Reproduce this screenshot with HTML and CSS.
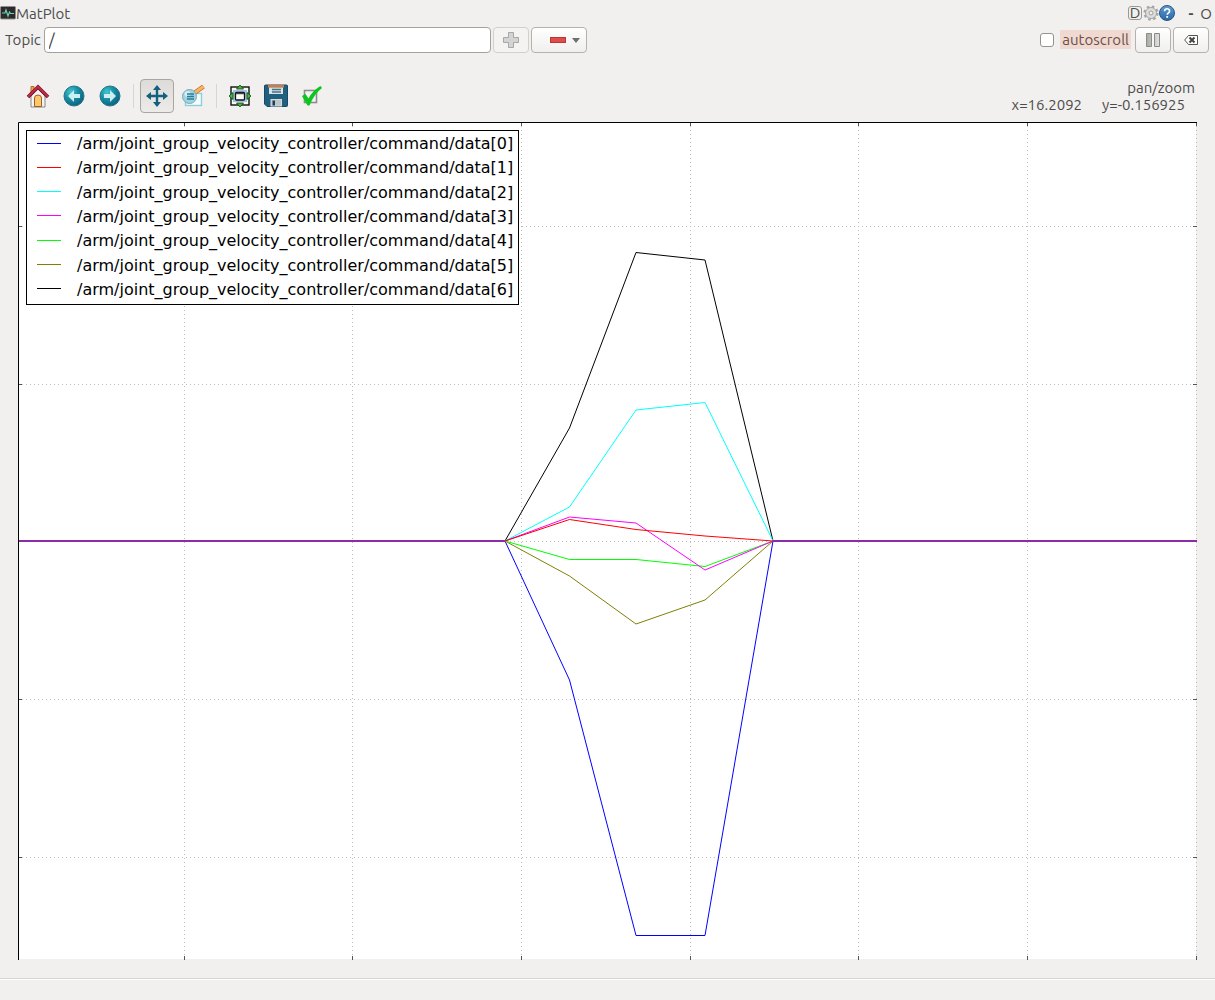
FILE: index.html
```html
<!DOCTYPE html>
<html lang="en">
<head>
<meta charset="utf-8">
<title>MatPlot</title>
<link rel="stylesheet" href="styles.css">
</head>
<body>
<header class="titlebar">
  <svg class="app-icon" width="16" height="14" viewBox="0 0 16 14" aria-hidden="true"><rect x=".5" y=".5" width="15" height="12.500" rx="1" fill="#2b2b2b" stroke="#8f8f8f"/><path d="M2 7h3l1-3 2 6 1.500-4 1 1.500H14" fill="none" stroke="#6fd0b4" stroke-width="1.200"/></svg>
  <h1 class="title">MatPlot</h1>
  <div class="window-buttons">
    <button class="flat dock" aria-label="Dock"><span class="dock-letter">D</span></button>
    <button class="flat" aria-label="Settings"><svg width="16" height="16" viewBox="0 0 16 16"><circle cx="8" cy="8" r="6.300" fill="none" stroke="#a5a5a5" stroke-width="2.600" stroke-dasharray="2.500 2.448"/><circle cx="8" cy="8" r="5.500" fill="#dcdcdc" stroke="#a5a5a5"/><circle cx="8" cy="8" r="2" fill="#f1f0ee" stroke="#a0a0a0"/></svg></button>
    <button class="flat" aria-label="Help"><svg width="16" height="16" viewBox="0 0 16 16"><defs><linearGradient id="help" x1="0" y1="0" x2="0" y2="1"><stop offset="0" stop-color="#5f9bd0"/><stop offset="1" stop-color="#2a67a5"/></linearGradient></defs><circle cx="8" cy="8" r="7.500" fill="url(#help)" stroke="#27588c"/><path d="M5.600 6.200c0-3.200 5-3.200 5 0 0 1.700-2.400 1.700-2.400 3.600" fill="none" stroke="#fff" stroke-width="1.600"/><rect x="7.300" y="11" width="1.800" height="1.800" fill="#fff"/></svg></button>
    <button class="flat minimize" aria-label="Minimize">-</button>
    <button class="flat maximize" aria-label="Float">O</button>
  </div>
</header>

<form class="topic-bar">
  <label for="topic">Topic</label>
  <input class="topic-input" id="topic" type="text" value="/">
  <button class="btn add" type="button" aria-label="Add topic" disabled><svg width="16" height="16" viewBox="0 0 16 16"><path d="M5.500.500h5v5h5v5h-5v5h-5v-5h-5v-5h5z" fill="#d3d3d3" stroke="#a6a6a6"/></svg></button>
  <button class="btn remove" type="button" aria-label="Remove topic"><svg width="16" height="6" viewBox="0 0 16 6"><rect x=".5" y=".5" width="15" height="5" fill="#e04c4c" stroke="#b83636"/></svg><svg width="8" height="6" viewBox="0 0 8 6"><path d="M0 1h8L4 6z" fill="#6f6f6f"/></svg></button>
  <span class="spacer"></span>
  <input class="check" id="autoscroll" type="checkbox">
  <label class="check-label" for="autoscroll">autoscroll</label>
  <button class="btn pause" type="button" aria-label="Pause"><svg width="14" height="14" viewBox="0 0 14 14"><defs><linearGradient id="bar"><stop offset="0" stop-color="#a8aaa6"/><stop offset="1" stop-color="#e2e3e0"/></linearGradient></defs><path d="M.5.500h5v13h-5zM8.500.500h5v13h-5z" fill="url(#bar)" stroke="#8a8c88"/></svg></button>
  <button class="btn clear" type="button" aria-label="Clear plot"><svg width="14" height="10" viewBox="0 0 14 10"><path d="M4.500.500h9v9h-9L.700 5z" fill="#fff" stroke="#555"/><path d="M5.500 2.500l5 5m0-5l-5 5" stroke="#444" stroke-width="2"/></svg></button>
</form>

<main class="figure">
  <div class="toolbar">
    <button class="tool" aria-label="Home"><svg width="24" height="24" viewBox="0 0 24 24"><path d="M5 2.500h3V10H5z" fill="#f5a83c" stroke="#b06a28"/><path d="M5 12l7-7 7 7v11H5z" fill="#f4f4f4" stroke="#888"/><path d="M8.500 22.500V14q0-3 3.500-3t3.500 3v8.500z" fill="#fcc868" stroke="#a05a2c"/><path d="M2 13L12 3l10 10" fill="none" stroke="#6d1426" stroke-width="3.600"/><path d="M2 12.700L12 2.700l10 10" fill="none" stroke="#c4284a" stroke-width="2.200"/></svg></button>
    <button class="tool" aria-label="Back"><svg width="24" height="24" viewBox="0 0 24 24"><defs><radialGradient id="ball" cx=".35" cy=".3" r=".75"><stop offset="0" stop-color="#40c8d0"/><stop offset=".5" stop-color="#158ca2"/><stop offset="1" stop-color="#0c607e"/></radialGradient></defs><circle cx="12" cy="12" r="10" fill="url(#ball)" stroke="#2c7188"/><path d="M6 12l6-6v4h6v4h-6v4z" fill="#cdeef2"/></svg></button>
    <button class="tool" aria-label="Forward"><svg width="24" height="24" viewBox="0 0 24 24"><circle cx="12" cy="12" r="10" fill="url(#ball)" stroke="#2c7188"/><path d="M18 12l-6-6v4H6v4h6v4z" fill="#cdeef2"/></svg></button>
    <span class="divider"></span>
    <button class="tool active" aria-label="Pan" aria-pressed="true"><svg width="24" height="24" viewBox="0 0 24 24"><path d="M12 3v18M3 12h18" stroke="#13607f" stroke-width="2.400"/><path d="M12 1l4 5H8zM12 23l4-5H8zM1 12l5-4v8zM23 12l-5-4v8z" fill="#13607f"/></svg></button>
    <button class="tool" aria-label="Zoom to rectangle"><svg width="24" height="24" viewBox="0 0 24 24"><rect x="4.500" y="9.500" width="16" height="12" fill="#f6fbfc" stroke="#8ccfdc" stroke-width="1.400"/><path d="M14 8.500l8.500-6" stroke="#b5642a" stroke-width="4.400"/><path d="M14 8.500l8.500-6" stroke="#fbb55c" stroke-width="3"/><circle cx="8.500" cy="12.500" r="7" fill="#a4d3de" stroke="#7aa9b8"/><circle cx="6.500" cy="10" r="3" fill="#d3edf2"/><path d="M6 10h7M6 12.500h7M6 15h7" stroke="#24809a" stroke-width="1.300"/></svg></button>
    <span class="divider"></span>
    <button class="tool" aria-label="Configure subplots"><svg width="24" height="24" viewBox="0 0 24 24"><rect x="3" y="3" width="18" height="18" fill="#f4f6f8" stroke="#111" stroke-width="1.400"/><rect x="5" y="6" width="14" height="12" fill="#a3c4e0"/><rect x="7.500" y="8.500" width="9" height="7.500" rx="1" fill="#fff" stroke="#111" stroke-width="1.300"/><path d="M8 9.500h8" stroke="#444" stroke-width="1.500"/><path d="M12 1l3.500 4h-7zM12 23l3.500-4h-7zM1 12l4-3.500v7zM23 12l-4-3.500v7z" fill="#38c438" stroke="#123d12" stroke-width=".8"/></svg></button>
    <button class="tool" aria-label="Save figure"><svg width="24" height="24" viewBox="0 0 24 24"><path d="M.5 2q0-1 1-1h21q1 0 1 1v19.500q0 1-1 1H3L.5 20z" fill="#205f80" stroke="#174962"/><path d="M4 1h16v2.500H4z" fill="#d67a3c"/><path d="M5 3.500h14V10H5z" fill="#d9e4e8"/><path d="M8 5.500h9M8 8h9" stroke="#477083" stroke-width="1.300"/><rect x="7" y="15.500" width="10.500" height="6.500" fill="#bfc4c6" stroke="#d8dcde"/><path d="M8.500 16.500h2.500v5H8.500z" fill="#174258"/></svg></button>
    <button class="tool" aria-label="Edit curves"><svg width="24" height="24" viewBox="0 0 24 24"><rect x="4.500" y="6.500" width="12" height="12" fill="#f4f4f4" stroke="#8d8d8d" stroke-width="1.600"/><path d="M2 12l3.500-2 3 4.500Q13 6 20.500 2L22 4q-8 6-12.500 17.500H7.500z" fill="#0bc71d"/></svg></button>
    <output class="readout"><span>pan/zoom</span><span class="coords"><span>x=16.2092</span><span>y=-0.156925</span></span></output>
  </div>

  <div class="plot">
    <svg class="chart" viewBox="0 0 1179 838" preserveAspectRatio="none" role="img" aria-label="Joint velocity commands over time">
      <rect width="1178" height="837" fill="#fff"/>
      <path class="grid" d="M166.500 0v838M334.500 0v838M503.500 0v838M672.500 0v838M840.500 0v838M1009.500 0v838M1178.500 0v838M0 104.500h1179M0 262.500h1179M0 419.500h1179M0 577.500h1179M0 735.500h1179"/>
      <path class="tick" d="M166.500 0v4M334.500 0v4M503.500 0v4M672.500 0v4M840.500 0v4M1009.500 0v4M1178.500 0v4M166.500 834v4M334.500 834v4M503.500 834v4M672.500 834v4M840.500 834v4M1009.500 834v4M1178.500 834v4M0 104.500h4M0 262.500h4M0 419.500h4M0 577.500h4M0 735.500h4M1175 104.500h4M1175 262.500h4M1175 419.500h4M1175 577.500h4M1175 735.500h4"/>
      <polyline class="line s0" points="487,419 551.500,558 618,813.500 687,813.500 755,419"/>
      <polyline class="line s6" points="487,419 551.500,306 618,130.500 687,138 755,419"/>
      <polyline class="line s2" points="487,419 551.500,385 618,288 687,280.500 755,419"/>
      <polyline class="line s5" points="487,419 551.500,454 618,502 687,478 755,419"/>
      <polyline class="line s4" points="487,419 551.500,437.500 618,437.500 687,444.500 755,419"/>
      <polyline class="line s3" points="487,419 551.500,395 618,401 687,448 755,419"/>
      <polyline class="line s1" points="487,419 551.500,397.500 618,407.500 687,414 755,419"/>
      <path class="rest" d="M0 419h487M755 419h424"/>
      <path class="frame" d="M.5 838V.500H1179"/>
    </svg>
    <ul class="legend">
      <li><i class="swatch b0"></i>/arm/joint_group_velocity_controller/command/data[0]</li>
      <li><i class="swatch b1"></i>/arm/joint_group_velocity_controller/command/data[1]</li>
      <li><i class="swatch b2"></i>/arm/joint_group_velocity_controller/command/data[2]</li>
      <li><i class="swatch b3"></i>/arm/joint_group_velocity_controller/command/data[3]</li>
      <li><i class="swatch b4"></i>/arm/joint_group_velocity_controller/command/data[4]</li>
      <li><i class="swatch b5"></i>/arm/joint_group_velocity_controller/command/data[5]</li>
      <li><i class="swatch b6"></i>/arm/joint_group_velocity_controller/command/data[6]</li>
    </ul>
  </div>
</main>
<footer class="statusbar"></footer>
</body>
</html>
```
FILE: styles.css
```css
* { box-sizing: border-box; }

body {
  margin: 0;
  height: 100vh;
  display: flex;
  flex-direction: column;
  background: #f1f0ee;
  color: #4c4c4c;
  font: 15px/17px "Ubuntu", "Open Sans", "Noto Sans", sans-serif;
}

button, input { font: inherit; color: inherit; margin: 0; }
svg { display: block; }

.titlebar {
  display: flex;
  align-items: center;
  height: 26px;
  padding-right: 2px;
}
.title { margin: 0; font-size: 15px; font-weight: 400; }
.window-buttons { display: flex; align-items: center; margin-left: auto; }
.flat {
  display: flex;
  align-items: center;
  justify-content: center;
  height: 16px;
  padding: 0;
  border: 0;
  background: none;
}
.dock { width: 16px; }
.dock-letter {
  width: 14px;
  height: 14px;
  border: 1px solid #999;
  border-radius: 3px;
  line-height: 12px;
}
.minimize { width: 16px; margin-left: 8px; font-weight: 700; }
.maximize { width: 14px; }

.topic-bar {
  display: flex;
  align-items: center;
  height: 27px;
  padding: 0 6px 0 5px;
}
.topic-input {
  flex: 0 1 447px;
  min-width: 80px;
  height: 26px;
  margin-left: 3px;
  padding: 0 4px;
  border: 1px solid #a5a19c;
  border-radius: 4px;
  background: #fff;
  font-size: 16px;
  color: #3c3c3c;
}
.btn {
  display: flex;
  align-items: center;
  justify-content: center;
  height: 26px;
  width: 36px;
  padding: 0;
  border: 1px solid #b5b1ac;
  border-radius: 4px;
  background: linear-gradient(#fff, #f0efed);
}
.add { margin-left: 2px; border-color: #d3d0cc; background: #f4f3f2; }
.remove { width: 56px; margin-left: 2px; gap: 6px; padding-left: 12px; }
.spacer { flex: 1; }
.check {
  appearance: none;
  width: 14px;
  height: 14px;
  border: 1px solid #96928d;
  border-radius: 3px;
  background: #fff;
}
.check-label {
  margin: 0 4px 1px 6px;
  padding: 1px 2px;
  background: #f0d9d0;
  color: #6b5048;
}
.clear { margin-left: 2px; }

.figure {
  flex: 1;
  min-height: 0;
  display: flex;
  flex-direction: column;
  padding: 20px 18px 18px;
}
.toolbar {
  display: flex;
  align-items: center;
  height: 49px;
  padding: 0 2px 4px;
}
.tool {
  display: flex;
  align-items: center;
  justify-content: center;
  width: 34px;
  height: 34px;
  margin: 0 1px;
  padding: 0;
  border: 1px solid transparent;
  border-radius: 4px;
  background: none;
}
.tool.active {
  border-color: #a9a5a0;
  background: linear-gradient(#dddbd8, #ecebe9);
}
.divider { width: 1px; height: 24px; margin: 0 5px; background: #d8d6d3; }
.readout { margin-left: auto; text-align: right; }
.readout > span { display: block; }
.readout .coords { display: flex; gap: 20px; padding-right: 10px; }

.plot { position: relative; flex: 1; min-height: 0; }
.chart { width: 100%; height: 100%; }
.chart path, .chart polyline { fill: none; vector-effect: non-scaling-stroke; }
.grid { stroke: #bdbdbd; stroke-dasharray: 1 3; }
.tick { stroke: #555; }
.frame { stroke: #000; }
.rest { stroke: #8c2ca8; stroke-width: 2px; }
.line { stroke-width: 1px; }
.s0 { stroke: #00f; }
.s1 { stroke: #f00; }
.s2 { stroke: #0ff; }
.s3 { stroke: #f0f; }
.s4 { stroke: #0f0; }
.s5 { stroke: #808000; }
.s6 { stroke: #000; }

.legend {
  position: absolute;
  top: 8px;
  left: 8px;
  height: 175px;
  display: flex;
  flex-direction: column;
  margin: 0;
  padding: 1px 5px 2px 10px;
  border: 1px solid #000;
  background: #fff;
  color: #000;
  font: 16px/24px "DejaVu Sans", sans-serif;
  list-style: none;
}
.legend li { flex: 1; display: flex; align-items: center; gap: 16px; }
.swatch { width: 24px; height: 1px; margin-bottom: 2px; }
.b0 { background: #00f; }
.b1 { background: #f00; }
.b2 { background: #0ff; }
.b3 { background: #f0f; }
.b4 { background: #0f0; }
.b5 { background: #808000; }
.b6 { background: #000; }

.statusbar {
  height: 22px;
  border-top: 1px solid #d6d5d3;
  box-shadow: inset 0 1px #fff;
}
```
